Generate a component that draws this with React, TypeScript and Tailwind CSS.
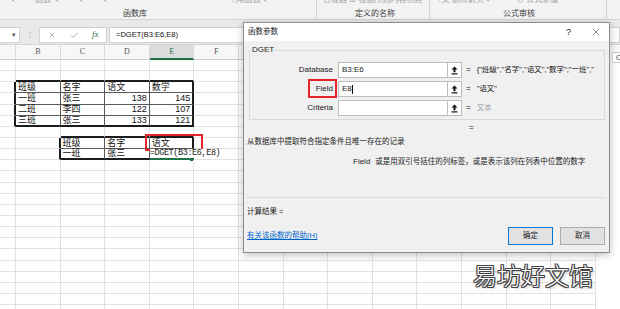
import { Check, X } from 'lucide-react'

const COLUMNS = ['A', 'B', 'C', 'D', 'E', 'F', 'G', 'H', 'I', 'J', 'K', 'L', 'M', 'N']
const ROW_COUNT = 23

const CELLS: Record<string, string> = {
  '3-1': '班级', '3-2': '名字', '3-3': '语文', '3-4': '数学',
  '4-1': '一班', '4-2': '张三', '4-3': '138', '4-4': '145',
  '5-1': '二班', '5-2': '李四', '5-3': '122', '5-4': '107',
  '6-1': '三班', '6-2': '张三', '6-3': '133', '6-4': '121',
  '8-2': '班级', '8-3': '名字', '8-4': '语文',
  '9-2': '一班', '9-3': '张三'
}

const TABLES = [
  { top: 3, bottom: 6, left: 1, right: 4 },
  { top: 8, bottom: 9, left: 2, right: 4 }
]

function tableAt(r: number, c: number): number {
  return TABLES.findIndex((t) => r >= t.top && r <= t.bottom && c >= t.left && c <= t.right)
}

function rightBorder(r: number, c: number): string {
  const a = tableAt(r, c)
  const b = tableAt(r, c + 1)
  if (a >= 0 && a === b) return 'border-r border-r-[#5a5a5a]'
  if (a >= 0 || b >= 0) return 'border-r-2 border-r-[#1c1c1c]'
  return 'border-r border-r-[#e2e2e2]'
}

function bottomBorder(r: number, c: number): string {
  if (r === 9 && c === 4) return 'border-b-2 border-b-[#1e7145]'
  const a = tableAt(r, c)
  const b = tableAt(r + 1, c)
  if (a >= 0 && a === b) return 'border-b border-b-[#5a5a5a]'
  if (a >= 0 || b >= 0) return 'border-b-2 border-b-[#1c1c1c]'
  return 'border-b border-b-[#e2e2e2]'
}

function Ribbon() {
  return (
    <div className="flex h-[20px] bg-[#f3f3f3] border-b border-b-[#d6d6d6] text-[#a3a3a3] overflow-hidden">
      <div className="w-[317px] shrink-0 flex flex-col border-r border-r-[#d4d4d4]">
        <div className="flex h-[8px] -mt-[4px] text-[8px] leading-[8px] whitespace-nowrap">
          <span className="ml-[11px]">▾</span>
          <span className="ml-[20px]">函数</span>
          <span className="ml-[4px]">▾</span>
          <span className="ml-[20px]">▾</span>
          <span className="ml-[20px]">▾</span>
          <span className="ml-[125px]">□用函数 ▾</span>
        </div>
        <span className="mt-[5px] pl-[123px] text-[8px] leading-[10px] text-[#3c3c3c]">函数库</span>
      </div>
      <div className="w-[113px] shrink-0 flex flex-col border-r border-r-[#d4d4d4]">
        <div className="flex h-[8px] -mt-[4px] text-[8px] leading-[8px] whitespace-nowrap pl-[6px]">
          合理器 ⊞ 根据所选内容创建
        </div>
        <span className="mt-[5px] pl-[38px] text-[8px] leading-[10px] text-[#3c3c3c]">定义的名称</span>
      </div>
      <div className="w-[177px] shrink-0 flex flex-col border-r border-r-[#d4d4d4]">
        <div className="flex h-[8px] -mt-[4px] text-[8px] leading-[8px] whitespace-nowrap pl-[7px]">
          <span>+文 删除箭头 ▾</span>
          <span className="ml-[26px]">⊙ 公式求值</span>
        </div>
        <span className="mt-[5px] pl-[73px] text-[8px] leading-[10px] text-[#3c3c3c]">公式审核</span>
      </div>
      <div className="flex-1" />
    </div>
  )
}

function FormulaBar() {
  return (
    <div className="flex h-[24px] bg-[#e9e9e9] pt-[7px] pb-[1px]">
      <div className="w-[20px] h-full bg-white border-y border-r border-[#d2d2d2] flex items-center justify-end pr-[3px] text-[7px] text-[#555]">
        ▾
      </div>
      <div className="w-[19px] h-full flex items-center justify-center text-[8px] text-[#9a9a9a]">⋮</div>
      <div className="w-[68px] h-full bg-white border border-[#d2d2d2] flex items-center">
        <X className="ml-[8px] w-[8px] h-[8px] text-[#6a6a6a]" strokeWidth={1.5} />
        <Check className="ml-[14px] w-[9px] h-[9px] text-[#6a6a6a]" strokeWidth={1.5} />
        <span className="ml-[13px] text-[9px] italic font-['Liberation_Serif',serif] text-[#217346]">fx</span>
      </div>
      <div className="ml-[2px] flex-1 h-full bg-white border border-[#d2d2d2] flex items-center pl-[6px] text-[7.5px] text-[#111]">
        =DGET(B3:E6,E8)
      </div>
    </div>
  )
}

function Sheet() {
  const rows = Array.from({ length: ROW_COUNT }, (_, i) => i + 1)
  return (
    <div className="flex flex-col">
      <div className="flex h-[16px] bg-[#f7f7f7] border-t border-t-[#d4d4d4]">
        {COLUMNS.map((col, c) => (
          <div
            key={col}
            className={`${c === 0 ? 'w-[16px]' : 'w-[44.6px]'} shrink-0 h-full flex items-center justify-center text-[8px] font-['Liberation_Serif',serif] border-r border-r-[#dadada] ${
              col === 'E'
                ? 'bg-[#dcdcdc] text-[#2c6e49] border-b-2 border-b-[#217346]'
                : 'text-[#555] border-b border-b-[#cdcdcd]'
            }`}
          >
            {c === 0 ? '' : col}
          </div>
        ))}
      </div>
      {rows.map((r) => (
        <div key={r} className="flex h-[11.15px]">
          {COLUMNS.map((col, c) => {
            const text = CELLS[`${r}-${c}`]
            const numeric = text !== undefined && /^\d+$/.test(text)
            return (
              <div
                key={col}
                className={`${c === 0 ? 'w-[16px]' : 'w-[44.6px]'} relative shrink-0 h-full flex items-center px-[2px] text-[9px] leading-none text-[#111] ${
                  numeric ? 'justify-end' : 'justify-start'
                } ${rightBorder(r, c)} ${bottomBorder(r, c)}`}
              >
                {text}
                {r === 9 && c === 4 && (
                  <>
                    <span className="relative z-10 -ml-[2px] h-full flex items-center bg-white pr-[2px] whitespace-nowrap font-['Liberation_Mono',monospace] text-[8.5px] tracking-[-0.4px] text-[#222]">
                      =DGET(B3:E6,E8)
                    </span>
                    <span className="absolute -right-[2px] -bottom-[3px] w-[4px] h-[4px] bg-[#1e7145]" />
                  </>
                )}
              </div>
            )
          })}
        </div>
      ))}
    </div>
  )
}

function CollapseIcon() {
  return (
    <svg width="7" height="9" viewBox="0 0 7 9">
      <path d="M3.5 0.5 L6.5 3.6 H4.5 V6.2 H2.5 V3.6 H0.5 Z" fill="#111" />
      <rect x="0.5" y="7.3" width="6" height="1.2" fill="#111" />
    </svg>
  )
}

function ArgRow({
  label,
  value,
  result,
  muted,
  caret,
  boxed
}: {
  label: string
  value: string
  result: string
  muted?: boolean
  caret?: boolean
  boxed?: boolean
}) {
  return (
    <div className="relative flex items-center h-[16px]">
      <span className="w-[83px] shrink-0 text-right text-[8px] leading-none">{label}</span>
      {boxed && <span className="absolute left-[58px] -top-[2px] w-[29px] h-[19px] border-2 border-[#e3242b]" />}
      <div className="ml-[5px] w-[110px] shrink-0 h-full bg-white border border-[#bdbdbd] flex items-center pl-[3px] text-[8px]">
        {value}
        {caret && <span className="w-px h-[9px] bg-[#111]" />}
      </div>
      <div className="w-[14px] shrink-0 h-full bg-white border-y border-r border-[#bdbdbd] flex items-center justify-center">
        <CollapseIcon />
      </div>
      <span className="ml-[4px] shrink-0 text-[8px] leading-none">=</span>
      <span
        className={`ml-[6px] mr-[2px] flex-1 min-w-0 overflow-hidden whitespace-nowrap text-[7.5px] leading-none ${
          muted ? 'text-[#a0a0a0]' : 'text-[#111]'
        }`}
      >
        {result}
      </span>
    </div>
  )
}

function FunctionDialog() {
  return (
    <div className="absolute left-[243px] top-[22px] w-[367px] h-[231px] flex flex-col bg-[#f0f0f0] border border-[#8d8d8d] shadow-[0_2px_8px_rgba(0,0,0,0.25)] text-[#1a1a1a]">
      <div className="h-[18px] shrink-0 bg-white flex items-center pl-[4px] pr-[8px]">
        <span className="text-[7.5px] leading-none">函数参数</span>
        <span className="ml-auto text-[9px] leading-none">?</span>
        <X className="ml-[20px] w-[10px] h-[10px] text-[#222]" strokeWidth={1.2} />
      </div>
      <div className="flex-1 flex flex-col px-[3px]">
        <fieldset className="mt-[4px] ml-[2px] mr-[1px] p-0 pb-[3px] border border-[#d9d9d9]">
          <legend className="ml-[1px] px-[1px] text-[8px] leading-[10px]">DGET</legend>
          <div className="flex flex-col gap-[3px] pt-[7px]">
            <ArgRow label="Database" value="B3:E6" result={'{"班级","名字","语文","数学";"一班","'} />
            <ArgRow label="Field" value="E8" result={'"语文"'} caret boxed />
            <ArgRow label="Criteria" value="" result="文本" muted />
          </div>
        </fieldset>
        <div className="mt-[3px] h-[10px] pl-[222px] text-[8px] leading-[10px]">=</div>
        <div className="mt-[4px] h-[10px] text-[7.5px] leading-[10px]">从数据库中提取符合指定条件且唯一存在的记录</div>
        <div className="mt-[10px] h-[10px] pl-[106px] flex items-center text-[7.5px] leading-[10px]">
          <span className="text-[8px]">Field</span>
          <span className="ml-[5px]">或是用双引号括住的列标签，或是表示该列在列表中位置的数字</span>
        </div>
        <div className="mt-[30px] border-t border-t-[#dadada]" />
        <div className="mt-[9px] h-[10px] text-[7.5px] leading-[10px]">计算结果 =</div>
        <div className="mt-[10px] h-[18px] flex items-center">
          <span className="text-[7.5px] leading-none text-[#0066cc] underline">有关该函数的帮助(H)</span>
          <button className="ml-auto w-[45px] h-full bg-[#e1e1e1] border border-[#0078d7] text-[7.5px] leading-none">
            确定
          </button>
          <button className="ml-[7px] mr-[1px] w-[45px] h-full bg-[#e1e1e1] border border-[#adadad] text-[7.5px] leading-none">
            取消
          </button>
        </div>
      </div>
    </div>
  )
}

export default function App() {
  return (
    <div className="relative w-[620px] h-[309px] overflow-hidden bg-white font-['Liberation_Sans','Noto_Sans_CJK_SC',sans-serif]">
      <Ribbon />
      <FormulaBar />
      <Sheet />

      <span className="absolute left-[145px] top-[134px] w-[58px] h-[17px] border-2 border-[#e3242b]" />

      <FunctionDialog />

      <span className="absolute left-[612px] top-[52px] w-[12px] h-[11px] border border-[#c8c8c8] bg-white pl-[3px] text-[8px] leading-[9px] text-[#444]">
        C
      </span>

      <span className="absolute left-[473px] top-[261px] text-[24px] leading-[28px] text-white font-['Noto_Sans_CJK_SC',sans-serif] font-light [text-shadow:1px_0_#444,-1px_0_#444,0_1px_#444,0_-1px_#444,1px_1px_#444,-1px_-1px_#444,1px_-1px_#444,-1px_1px_#444,2px_2px_3px_rgba(0,0,0,0.3)]">
        易坊好文馆
      </span>
    </div>
  )
}
